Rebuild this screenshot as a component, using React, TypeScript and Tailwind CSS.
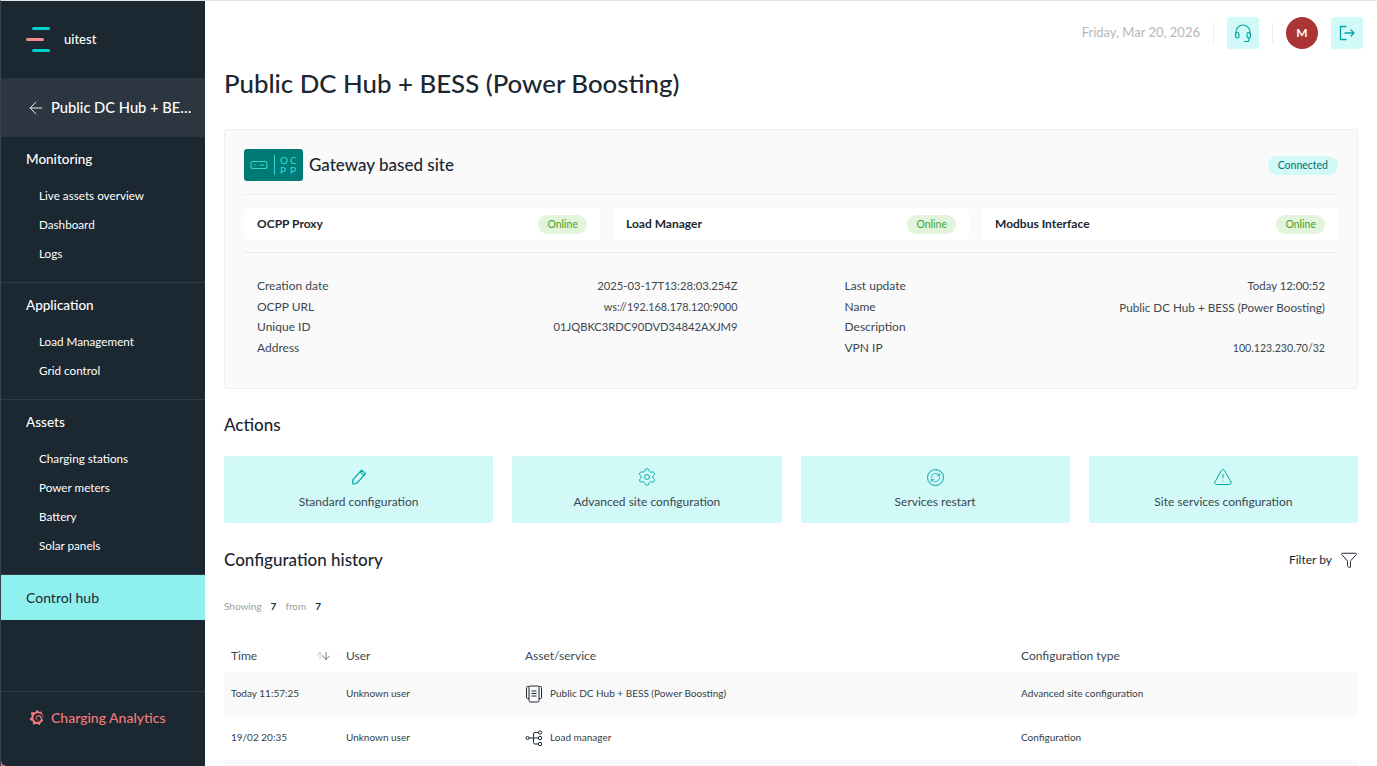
import React from "react";
import { ArrowLeft, ArrowDown, ArrowUp, Funnel, RefreshCw, Settings, TriangleAlert } from "lucide-react";
import { SiGrafana } from "react-icons/si";

const nav = [
  { title: "Monitoring", items: ["Live assets overview", "Dashboard", "Logs"] },
  { title: "Application", items: ["Load Management", "Grid control"] },
  { title: "Assets", items: ["Charging stations", "Power meters", "Battery", "Solar panels"] },
];

const services = ["OCPP Proxy", "Load Manager", "Modbus Interface"];

const infoLeft = [
  ["Creation date", "2025-03-17T13:28:03.254Z", "text-[11.2px]"],
  ["OCPP URL", "ws://192.168.178.120:9000", "text-[10.8px]"],
  ["Unique ID", "01JQBKC3RDC90DVD34842AXJM9", "text-[11.2px]"],
  ["Address", "", ""],
];

const infoRight = [
  ["Last update", "Today 12:00:52", "text-[11.4px]"],
  ["Name", "Public DC Hub + BESS (Power Boosting)", "text-[11.7px]"],
  ["Description", "", ""],
  ["VPN IP", "100.123.230.70/32", "text-[10.6px]"],
];

function PencilIcon() {
  return (
    <svg width="18" height="18" viewBox="0 0 18 18" fill="none" stroke="currentColor" strokeWidth="1.2" strokeLinejoin="round">
      <path d="M11.5 2.2 15.6 5.6 7 15 3 16.2 2.6 12.2Z" />
      <path d="M10 3.9 14 7.4" />
    </svg>
  );
}

function HeadsetIcon() {
  return (
    <svg width="20" height="20" viewBox="0 0 20 20" fill="none" stroke="currentColor" strokeWidth="1.2" strokeLinecap="round" strokeLinejoin="round">
      <path d="M3 11V9a7 7 0 0 1 14 0v2" />
      <rect x="2.500" y="9.500" width="3.500" height="5.500" rx="1.700" />
      <rect x="14" y="9.500" width="3.500" height="5.500" rx="1.700" />
      <path d="M16 15v1.500a2 2 0 0 1-2 2h-2.500" />
    </svg>
  );
}

function LogoutIcon() {
  return (
    <svg width="18" height="18" viewBox="0 0 18 18" fill="none" stroke="currentColor" strokeWidth="1.3" strokeLinecap="round" strokeLinejoin="round">
      <path d="M8 2.500H2.500v13H8" />
      <path d="M7 9h9M13 6l3 3-3 3" />
    </svg>
  );
}

function GatewayBadge() {
  return (
    <div className="flex h-[32px] w-[59px] items-center justify-center gap-[5px] rounded-[3px] bg-[#007a74] text-[#2fd9d0]">
      <svg width="20" height="12" viewBox="0 0 20 12" fill="none" stroke="currentColor" strokeWidth="1.1">
        <rect x="2" y="2.500" width="16" height="7" rx="2" />
        <path d="M5 6h1.500M8 6h.5M11 6h4" />
      </svg>
      <div className="h-[20px] w-px bg-[#2fd9d0]" />
      <div className="grid grid-cols-2 gap-x-[2px] text-[10px] leading-[10px] font-medium">
        <span>O</span>
        <span>C</span>
        <span>P</span>
        <span>P</span>
      </div>
    </div>
  );
}

function AssetIcon() {
  return (
    <svg width="18" height="18" viewBox="0 0 18 18" fill="none" stroke="#1b2731" strokeWidth="1">
      <path d="M4 1.500H2.500a1 1 0 0 0-1 1v10a1 1 0 0 0 1 1H4" />
      <path d="M14 1.500h1.500a1 1 0 0 1 1 1v10a1 1 0 0 1-1 1H14" />
      <rect x="4" y="1" width="10" height="16" rx="1.500" />
      <path d="M6.500 6h5M6.500 8.500h5M6.500 11h5" />
    </svg>
  );
}

function TreeIcon() {
  return (
    <svg width="18" height="18" viewBox="0 0 18 18" fill="none" stroke="#1b2731" strokeWidth="1">
      <circle cx="2.500" cy="9" r="1.500" />
      <circle cx="15" cy="3.500" r="1.700" />
      <circle cx="15" cy="9" r="1.700" />
      <circle cx="15" cy="15" r="1.700" />
      <path d="M4 9h9.300M13.300 3.500H10a1.500 1.500 0 0 0-1.500 1.500v8.500a1.500 1.500 0 0 0 1.500 1.500h3.300" />
    </svg>
  );
}

function Online() {
  return <span className="rounded-full bg-[#e2f4dc] px-[9px] py-[2px] text-[10.5px] leading-[15px] text-[#3fa52a]">Online</span>;
}

export default function App() {
  return (
    <div className="flex h-[766px] w-[1377px] overflow-hidden border-t border-l border-t-[#e3e3e3] border-l-[#39434c] bg-white font-['Lato',sans-serif] text-[#1b2731]">
      <div className="w-[204px] shrink-0 bg-[#d9706f]">
        <aside className="flex h-full flex-col rounded-bl-[6px] bg-[#1b2731] text-white">
          <div className="flex h-[77px] items-center gap-[13px] pl-[25px]">
            <div className="flex w-[25px] flex-col gap-[8px]">
              <div className="ml-[6px] h-[3px] w-[18px] rounded-full bg-[#00d1cc]" />
              <div className="h-[3px] w-[18px] rounded-full bg-[#f98a8a]" />
              <div className="ml-[6px] h-[3px] w-[18px] rounded-full bg-[#00d1cc]" />
            </div>
            <span className="text-[13px] font-medium">uitest</span>
          </div>
          <div className="flex h-[59px] items-center gap-[5px] bg-[#2b3640] pl-[25px]">
            <ArrowLeft size={20} strokeWidth={1.1} />
            <span className="w-[143px] truncate text-[14.7px] font-medium">Public DC Hub + BESS (Power Boosting)</span>
          </div>
          {nav.map((section) => (
            <div key={section.title} className="border-b border-[#2f3a44] pt-[11px] pb-[14px]">
              <div className="mb-[11px] pl-[25px] text-[13.5px] leading-[22px] font-medium">{section.title}</div>
              {section.items.map((item) => (
                <div key={item} className="h-[29px] pl-[38px] text-[11.7px] leading-[29px] text-white">
                  {item}
                </div>
              ))}
            </div>
          ))}
          <div className="flex h-[45px] items-center bg-[#8ef0ef] pb-px pl-[25px] text-[14px] text-[#1b2731]">Control hub</div>
          <div className="mt-auto flex h-[75px] items-center gap-[7px] border-t border-[#2f3a44] pb-[24px] pl-[28px] text-[#f47b7b]">
            <SiGrafana size={15} />
            <span className="text-[14px] font-medium">Charging Analytics</span>
          </div>
        </aside>
      </div>

      <main className="min-w-0 flex-1 px-[19px]">
        <div className="-mr-[5px] flex h-[63px] items-center justify-end gap-[13px]">
          <span className="text-[13px] text-[#b5b8bb]">Friday, Mar 20, 2026</span>
          <div className="h-[20px] w-px bg-[#ececec]" />
          <div className="flex h-[32px] w-[32px] items-center justify-center rounded-[3px] bg-[#d0f9f8] text-[#00a8a2]">
            <HeadsetIcon />
          </div>
          <div className="h-[20px] w-px bg-[#ececec]" />
          <div className="flex h-[32px] w-[32px] items-center justify-center rounded-full bg-[#ab3535] text-[12px] font-bold text-white">M</div>
          <div className="flex h-[32px] w-[32px] items-center justify-center rounded-[3px] bg-[#d0f9f8] text-[#00a8a2]">
            <LogoutIcon />
          </div>
        </div>

        <h1 className="pb-[2px] text-[25.8px] leading-[38px] font-medium">Public DC Hub + BESS (Power Boosting)</h1>

        <section className="mt-[25px] h-[260px] rounded-[3px] border border-[#efefef] bg-[#fafafa] px-[19px] pt-[19px]">
          <div className="flex items-center justify-between border-b border-[#ececec] pb-[13px]">
            <div className="flex items-center gap-[6px]">
              <GatewayBadge />
              <span className="text-[17px] font-medium">Gateway based site</span>
            </div>
            <span className="rounded-full bg-[#d0f9f8] px-[10px] py-[2px] text-[10.5px] leading-[15px] text-[#00706b]">Connected</span>
          </div>
          <div className="grid grid-cols-3 gap-[13px] border-b border-[#ececec] pt-[13px] pb-[12px]">
            {services.map((service) => (
              <div key={service} className="flex h-[32px] items-center justify-between rounded-[3px] bg-white px-[13px]">
                <span className="text-[12px] font-bold">{service}</span>
                <Online />
              </div>
            ))}
          </div>
          <div className="grid grid-cols-2 gap-[107px] px-[13px] pt-[23px] text-[12px] leading-[20.67px] text-[#3c4750]">
            {[infoLeft, infoRight].map((col, i) => (
              <div key={i}>
                {col.map(([label, value, size]) => (
                  <div key={label} className="flex h-[20.67px] justify-between">
                    <span>{label}</span>
                    <span className={size}>{value}</span>
                  </div>
                ))}
              </div>
            ))}
          </div>
        </section>

        <h2 className="mt-[24px] text-[17px] leading-[24px] font-medium">Actions</h2>
        <div className="mt-[19px] grid grid-cols-4 gap-[19px]">
          {[
            { label: "Standard configuration", icon: <PencilIcon /> },
            { label: "Advanced site configuration", icon: <Settings size={20} strokeWidth={1.1} /> },
            { label: "Services restart", icon: <span className="flex h-[17px] w-[17px] items-center justify-center rounded-full border border-[#00a8a2]"><RefreshCw size={11} strokeWidth={1.6} /></span> },
            { label: "Site services configuration", icon: <TriangleAlert size={20} strokeWidth={1.2} /> },
          ].map((action) => (
            <div key={action.label} className="flex h-[67px] flex-col items-center rounded-[3px] bg-[#d0f9f8] pt-[12px]">
              <div className="flex h-[18px] items-center text-[#00a8a2]">{action.icon}</div>
              <span className="mt-[7px] text-[12px] leading-[18px] text-[#3c4750]">{action.label}</span>
            </div>
          ))}
        </div>

        <div className="mt-[24px] flex h-[26px] items-center justify-between">
          <h2 className="text-[17px] font-medium">Configuration history</h2>
          <div className="flex items-center gap-[8px] text-[12px]">
            <span>Filter by</span>
            <Funnel size={18} strokeWidth={1.3} />
          </div>
        </div>
        <div className="mt-[26px] flex h-[14px] items-center gap-[9px] text-[10px] text-[#9a9fa3]">
          <span>Showing</span>
          <span className="font-bold text-[#1b2731]">7</span>
          <span>from</span>
          <span className="font-bold text-[#1b2731]">7</span>
        </div>

        <div className="mt-[26px] grid h-[33px] grid-cols-[115px_179px_496px_1fr] items-center px-[7px] text-[12px] text-[#3c4750]">
          <div className="flex items-center justify-between pr-[14px]">
            <span>Time</span>
            <span className="flex text-[#9a9fa3]">
              <ArrowUp size={12} strokeWidth={1} className="-mr-[6px]" />
              <ArrowDown size={12} strokeWidth={1.2} className="text-[#1b2731]" />
            </span>
          </div>
          <span>User</span>
          <span>Asset/service</span>
          <span>Configuration type</span>
        </div>
        <div className="grid h-[44px] grid-cols-[115px_179px_496px_1fr] items-center bg-[#f9f9f9] px-[7px] pb-px text-[10px] text-[#333e47]">
          <span>Today 11:57:25</span>
          <span>Unknown user</span>
          <span className="flex items-center gap-[7px]"><AssetIcon />Public DC Hub + BESS (Power Boosting)</span>
          <span>Advanced site configuration</span>
        </div>
        <div className="grid h-[44px] grid-cols-[115px_179px_496px_1fr] items-center px-[7px] pb-px text-[10px] text-[#333e47]">
          <span>19/02 20:35</span>
          <span>Unknown user</span>
          <span className="flex items-center gap-[7px]"><TreeIcon />Load manager</span>
          <span>Configuration</span>
        </div>
        <div className="h-[6px] bg-[#f9f9f9]" />
      </main>
    </div>
  );
}
